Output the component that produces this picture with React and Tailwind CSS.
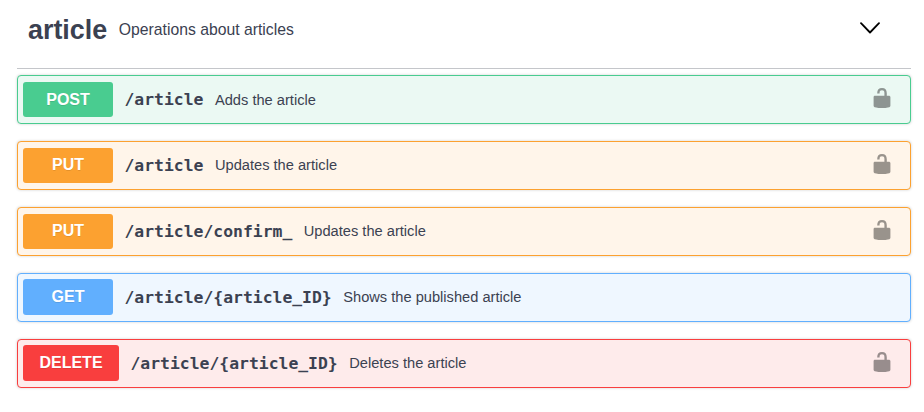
const UNLOCKED =
  "M15.8 8H14V5.6C14 2.703 12.665 1 10 1 7.334 1 6 2.703 6 5.6V6h2v-.801C8 3.754 8.797 3 10 3c1.203 0 2 .754 2 2.199V8H4c-.553 0-1 .646-1 1.199V17c0 .549.428 1.139.951 1.307l1.197.387C5.672 18.861 6.55 19 7.1 19h5.8c.549 0 1.428-.139 1.951-.307l1.196-.387c.524-.167.953-.757.953-1.306V9.199C17 8.646 16.352 8 15.8 8z";

const STYLES = {
  POST: { row: "border-[#49cc90] bg-[#ebf9f3]", badge: "bg-[#49cc90] w-[90px] h-[35px] mt-px pt-px", summary: "mt-[7px]" },
  PUT: { row: "border-[#fca130] bg-[#fff5ea]", badge: "bg-[#fca130] w-[90px] h-[35px] mt-px pb-px", summary: "mt-[6px]" },
  GET: { row: "border-[#61affe] bg-[#eff7ff]", badge: "bg-[#61affe] w-[90px] h-9 pb-px", summary: "mt-[6px]" },
  DELETE: { row: "border-[#f93e3e] bg-[#feebeb]", badge: "bg-[#f93e3e] w-24 h-9 pb-px", summary: "mt-[6px]" },
};

const OPERATIONS = [
  { method: "POST", path: "/article", summary: "Adds the article", auth: true },
  { method: "PUT", path: "/article", summary: "Updates the article", auth: true },
  { method: "PUT", path: "/article/confirm_", summary: "Updates the article", auth: true },
  { method: "GET", path: "/article/{article_ID}", summary: "Shows the published article", auth: false },
  { method: "DELETE", path: "/article/{article_ID}", summary: "Deletes the article", auth: true },
];

function Operation({ method, path, summary, auth }) {
  const s = STYLES[method];
  return (
    <div className={`flex h-[49px] items-start rounded border pt-[5px] pl-[5px] pr-[16.5px] shadow-[0_0_3px_rgba(0,0,0,0.19)] ${s.row}`}>
      <div className={`flex shrink-0 items-center justify-center rounded-[3px] text-[16px] font-bold text-white [text-shadow:0_1px_0_rgba(0,0,0,0.1)] ${s.badge}`}>
        {method}
      </div>
      <div className="ml-[11.5px] mt-[7px] whitespace-nowrap font-['DejaVu_Sans_Mono',monospace] text-[16.4px] leading-6 font-bold">
        {path}
      </div>
      <div className={`ml-[11.5px] whitespace-nowrap text-[14.65px] leading-6 ${s.summary}`}>{summary}</div>
      {auth && (
        <svg viewBox="0 0 20 20" preserveAspectRatio="none" className="ml-auto mt-[6px] h-[22px] w-6 text-black/40" fill="currentColor">
          <path d={UNLOCKED} />
        </svg>
      )}
    </div>
  );
}

export default function App() {
  return (
    <div className="h-[412px] w-[924px] overflow-hidden bg-white pl-[17px] pr-[13px] font-['Liberation_Sans',Arial,sans-serif] text-[#3b4151]">
      <header className="flex h-[69px] items-start border-b border-[#3b4151]/30 pl-[11px] pr-[30px]">
        <h2 className="mt-[12px] text-[26.9px] leading-9 font-bold">article</h2>
        <p className="ml-[11.5px] mt-[18px] text-[15.75px] leading-6">Operations about articles</p>
        <svg viewBox="0 0 21 12" className="ml-auto mt-[22px] h-3 w-[21px]" fill="none" stroke="black" strokeWidth="1.8" strokeLinecap="round" strokeLinejoin="round">
          <path d="M1 1.2 10 10.5 19 1.2" />
        </svg>
      </header>
      <main className="mt-[6px] flex flex-col gap-[17px]">
        {OPERATIONS.map((op, i) => (
          <Operation key={i} {...op} />
        ))}
      </main>
    </div>
  );
}
